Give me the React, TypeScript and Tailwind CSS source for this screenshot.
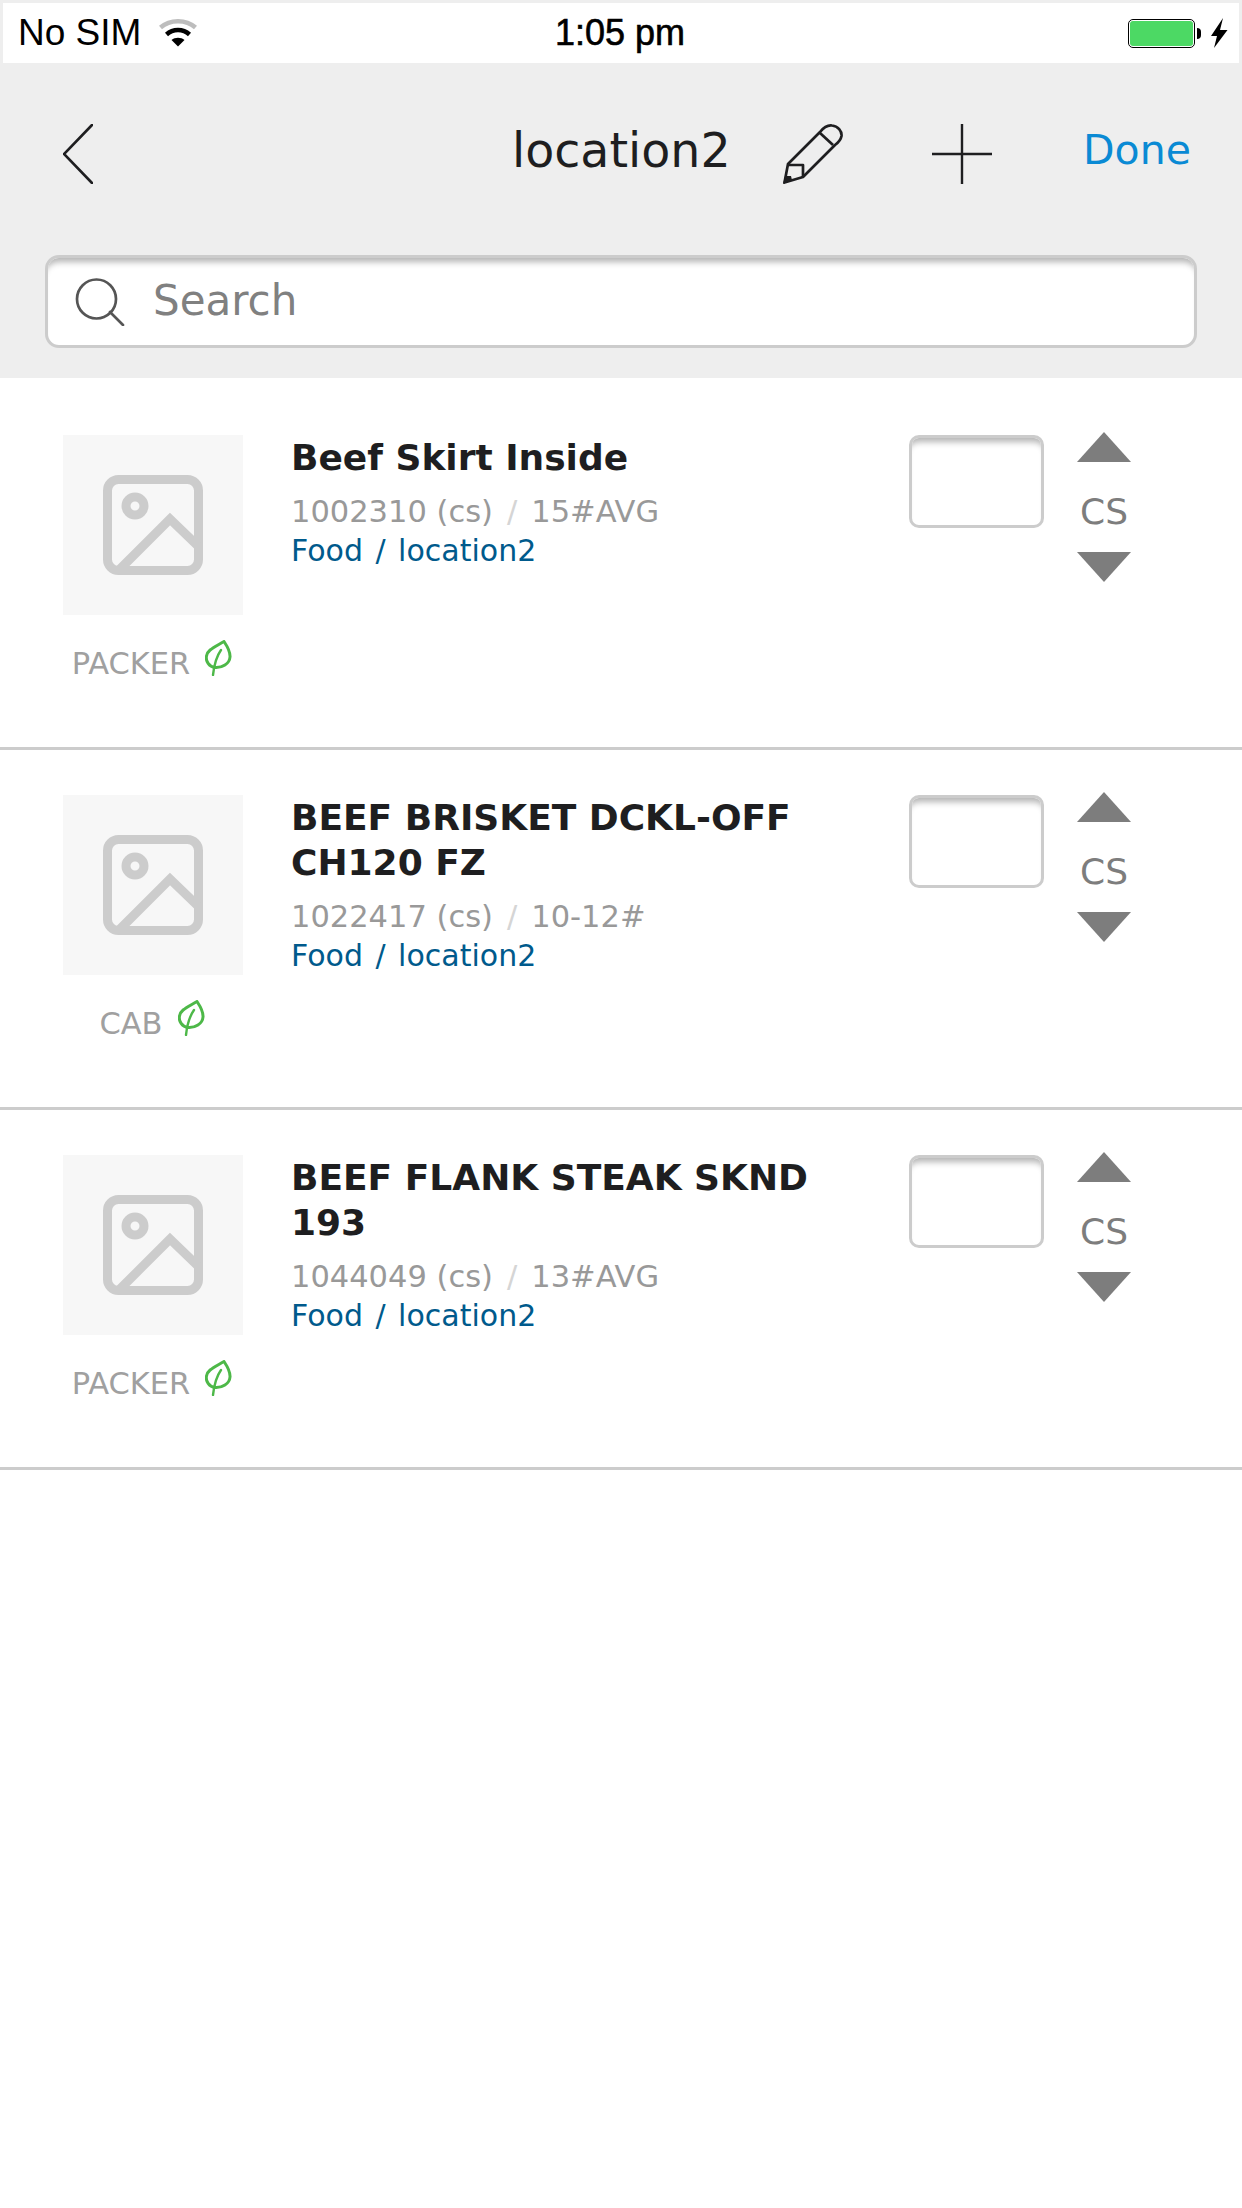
import React from 'react'

const items = [
  { title: 'Beef Skirt Inside', code: '1002310 (cs)', size: '15#AVG', brand: 'PACKER' },
  { title: 'BEEF BRISKET DCKL-OFF CH120 FZ', code: '1022417 (cs)', size: '10-12#', brand: 'CAB' },
  { title: 'BEEF FLANK STEAK SKND 193', code: '1044049 (cs)', size: '13#AVG', brand: 'PACKER' },
]

function StatusBar() {
  return (
    <div className="relative flex h-[60px] items-center bg-white pl-[15px] font-['Liberation_Sans',sans-serif] text-[37px] text-black">
      <span>No SIM</span>
      <svg className="ml-[18px] mb-[2px]" width="38" height="29" viewBox="0 0 38 29" fill="none">
        <path d="M1.5 9.5 C11 1 27 1 36.5 9.5" stroke="#bdbdbd" strokeWidth="4.5" />
        <path d="M7.5 16.5 C14 10.5 24 10.5 30.5 16.5" stroke="#000" strokeWidth="4.5" />
        <path d="M12.5 22 C16 19 22 19 25.5 22 L19 28.5 Z" fill="#000" />
      </svg>
      <span className="absolute left-[552px] text-[36px] [-webkit-text-stroke:0.6px_black]">1:05 pm</span>
      <div className="ml-auto flex items-center pr-[11px]">
        <div className="h-[29px] w-[67px] rounded-[5px] border-[1.5px] border-black bg-white p-px">
          <div className="h-full rounded-[3px] bg-[#4cd964]" />
        </div>
        <div className="ml-[2px] h-[11px] w-[4px] rounded-r-full bg-black" />
        <svg className="ml-[10px]" width="17" height="30" viewBox="0 0 17 30">
          <path d="M12 0 L0 18 L6 18 L3 30 L16.5 12 L9 12 Z" fill="#000" />
        </svg>
      </div>
    </div>
  )
}

function Pencil() {
  return (
    <svg width="60" height="60" viewBox="0 0 60 60" fill="none" stroke="#1e1e20" strokeWidth="2.7" strokeLinejoin="round">
      <path d="M5 40 L37 8 C41 3 45 1 49 1.5 C55 2 59 7 58.5 12 C58 15 56 18 52 21 L20 53 L1.5 58.5 Z" />
      <path d="M37 9 L50 21" />
      <path d="M5 41 L20 41 L20 53" />
      <path d="M0 60 L3 48 L4 52 L8 52 L9 56 Z" fill="#1e1e20" stroke="none" />
    </svg>
  )
}

function Header() {
  return (
    <div className="h-[378px] bg-[#eeeeee] pt-[3px] font-['DejaVu_Sans',sans-serif]">
      <div className="mx-[3px]">
        <StatusBar />
      </div>
      <div className="mt-[61px] flex h-[60px] items-center pl-[63px]">
        <svg width="30" height="60" viewBox="0 0 30 60" fill="none" stroke="#1e1e20" strokeWidth="2.6" strokeLinecap="round">
          <path d="M29 1 L1 30 L29 59" />
        </svg>
        <span className="ml-[419px] w-[271px] pb-[7px] text-[47.5px] leading-[60px] text-[#1e1e20]">location2</span>
        <Pencil />
        <svg className="ml-[89px]" width="60" height="60" viewBox="0 0 60 60" stroke="#1e1e20" strokeWidth="2.4">
          <path d="M30 0 V60 M0 30 H60" />
        </svg>
        <span className="ml-[91px] pb-[8px] text-[41px] leading-[60px] text-[#0a8ad4]">Done</span>
      </div>
      <div className="mx-[45px] mt-[71px] flex h-[93px] items-center rounded-[14px] border-[3px] border-[#cccccc] bg-white pl-[27px] shadow-[inset_0_9px_6px_-5px_#b5b5b5]">
        <svg width="50" height="48" viewBox="0 0 50 48" fill="none" stroke="#555555" strokeWidth="2.7" strokeLinecap="round">
          <circle cx="21.5" cy="21" r="19.5" />
          <path d="M35 34 L48 47" />
        </svg>
        <span className="ml-[28px] pb-[2px] text-[42px] leading-[60px] text-[#808080]">Search</span>
      </div>
    </div>
  )
}

function Thumb() {
  return (
    <div className="flex h-[180px] w-[180px] items-center justify-center bg-[#f7f7f7]">
      <svg width="100" height="100" viewBox="0 0 100 100" fill="none" stroke="#cccccc" strokeWidth="9">
        <rect x="4.5" y="4.5" width="91" height="91" rx="11" />
        <circle cx="32" cy="31" r="9" />
        <path d="M16 95 L67 44 L95 71" />
      </svg>
    </div>
  )
}

function Leaf() {
  return (
    <svg className="ml-[15px] mb-[12px]" width="27" height="36" viewBox="0 0 27 36" fill="none" stroke="#4db848" strokeWidth="3" strokeLinecap="round" strokeLinejoin="round">
      <path d="M19 1.5 C22 6 25.5 11 25 17 C24.5 24 17 28 10 27.5 C4 27 0.5 21 1.5 16 C2.5 10 8 8 19 1.5 Z" />
      <path d="M8 35 C9 26 11 17 16 10" strokeWidth="2.4" />
    </svg>
  )
}

function ItemRow({ title, code, size, brand }: { title: string; code: string; size: string; brand: string }) {
  return (
    <div className="flex h-[360px] border-b-[3px] border-[#cccccc] pl-[63px] pt-[45px]">
      <div className="w-[180px]">
        <Thumb />
        <div className="mt-[25px] -ml-[2px] flex items-center justify-center">
          <span className="text-[30.5px] leading-[36px] text-[#a0a0a0]">{brand}</span>
          <Leaf />
        </div>
      </div>
      <div className="ml-[48px] w-[618px]">
        <div className="w-[570px] text-[36px] font-bold leading-[45px] text-[#1e1e20]">{title}</div>
        <div className="mt-[12px] flex gap-[14px] text-[30.5px] leading-[39px] text-[#999999]">
          <span>{code}</span>
          <span className="text-[#d5d5d5]">/</span>
          <span>{size}</span>
        </div>
        <div className="text-[30px] leading-[39px] text-[#005a8c] [word-spacing:3px]">Food / location2</div>
      </div>
      <div className="h-[93px] w-[135px] rounded-[10px] border-[3px] border-[#cccccc] bg-white shadow-[inset_0_9px_6px_-5px_#b5b5b5]" />
      <div className="-mt-[3px] ml-[33px] flex w-[54px] flex-col items-center">
        <svg width="54" height="30" viewBox="0 0 54 30"><path d="M27 0 L54 30 H0 Z" fill="#7d7d7d" /></svg>
        <span className="mt-[27px] text-[36px] leading-[45px] text-[#7d7d7d]">CS</span>
        <svg className="mt-[18px]" width="54" height="30" viewBox="0 0 54 30"><path d="M0 0 H54 L27 30 Z" fill="#7d7d7d" /></svg>
      </div>
    </div>
  )
}

export default function App() {
  return (
    <div className="min-h-[2208px] bg-white font-['DejaVu_Sans',sans-serif]">
      <Header />
      <div className="pt-[12px]">
        {items.map((item) => (
          <ItemRow key={item.code} {...item} />
        ))}
      </div>
    </div>
  )
}
